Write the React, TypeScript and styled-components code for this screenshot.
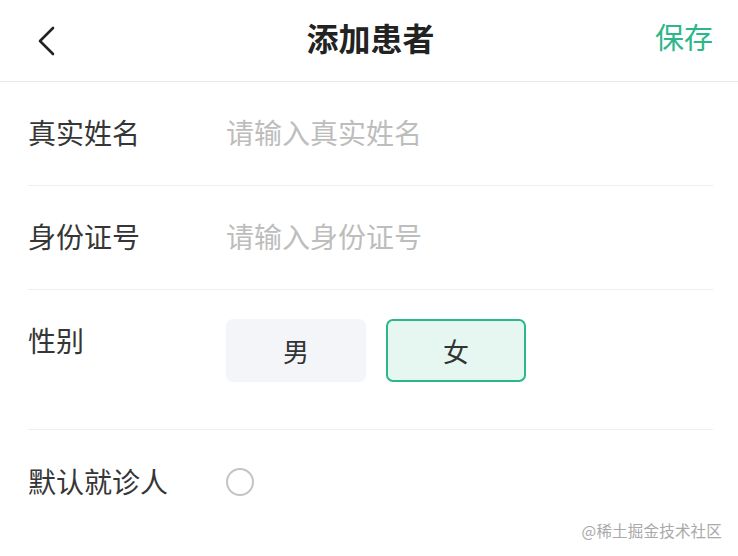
import React, { useState } from 'react';
import styled, { createGlobalStyle } from 'styled-components';

const GlobalStyle = createGlobalStyle`
  html, body {
    margin: 0;
    padding: 0;
    background: #fff;
  }
  body {
    font-family: "Noto Sans CJK SC", "Noto Sans", sans-serif;
    -webkit-font-smoothing: antialiased;
  }
  * {
    box-sizing: border-box;
  }
`;

const Page = styled.div`
  position: relative;
  width: 738px;
  height: 556px;
  overflow: hidden;
  background: #fff;
`;

const Header = styled.div`
  height: 82px;
  display: grid;
  grid-template-columns: 1fr auto 1fr;
  align-items: center;
  padding: 0 25px 0 28px;
  border-bottom: 1px solid #e8e8e8;
`;

const BackButton = styled.button`
  justify-self: start;
  background: none;
  border: none;
  padding: 0 0 0 8px;
  display: flex;
  align-items: center;
  cursor: pointer;
`;

const Title = styled.h1`
  margin: 0;
  font-size: 32px;
  font-weight: 700;
  color: #222;
  line-height: 1;
  padding-bottom: 8px;
`;

const SaveButton = styled.button`
  justify-self: end;
  background: none;
  border: none;
  padding: 0 0 8px;
  font-family: inherit;
  font-size: 29px;
  color: #2bb78a;
  line-height: 1;
  cursor: pointer;
`;

const Form = styled.div`
  padding: 0 25px 0 28px;
`;

const Row = styled.div<{ $top?: boolean; $last?: boolean }>`
  display: flex;
  align-items: ${p => (p.$top ? 'flex-start' : 'center')};
  padding: ${p => (p.$top ? '29px 0 47px' : '36px 0 39px')};
  border-bottom: ${p => (p.$last ? 'none' : '1px solid #eeeeee')};
`;

const Label = styled.div<{ $offset?: boolean }>`
  width: 198px;
  flex-shrink: 0;
  font-size: 28px;
  line-height: 28px;
  color: #363636;
  margin-top: ${p => (p.$offset ? '7px' : '0')};
`;

const Input = styled.input`
  flex: 1;
  border: none;
  outline: none;
  padding: 0;
  font-family: inherit;
  font-size: 28px;
  line-height: 28px;
  height: 28px;
  color: #333;
  background: transparent;
  &::placeholder {
    color: #bdbdbd;
  }
`;

const Options = styled.div`
  display: flex;
  gap: 20px;
`;

const Option = styled.button<{ $active: boolean }>`
  width: 140px;
  height: 63px;
  border-radius: 7px;
  border: 2px solid ${p => (p.$active ? '#2bb78a' : 'transparent')};
  background: ${p => (p.$active ? '#e6f7f1' : '#f4f5f9')};
  font-family: inherit;
  font-size: 26px;
  color: #333;
  cursor: pointer;
  display: flex;
  align-items: center;
  justify-content: center;
  padding-bottom: 2px;
`;

const Radio = styled.span<{ $checked: boolean }>`
  width: 28px;
  height: 28px;
  margin-top: 2px;
  border-radius: 50%;
  border: 2px solid ${p => (p.$checked ? '#2bb78a' : '#c4c4c4')};
  background: ${p => (p.$checked ? '#2bb78a' : '#fff')};
  cursor: pointer;
`;

const Watermark = styled.div`
  position: absolute;
  right: 16px;
  bottom: 15px;
  font-size: 15.5px;
  color: #a9a9a9;
  letter-spacing: 0.2px;
`;

export default function App() {
  const [gender, setGender] = useState<'male' | 'female'>('female');
  const [isDefault, setIsDefault] = useState(false);

  return (
    <Page>
      <GlobalStyle />
      <Header>
        <BackButton aria-label="返回">
          <svg width="20" height="30" viewBox="0 0 20 30">
            <path d="M17 2 L4 15 L17 28" fill="none" stroke="#222" strokeWidth="2.6" strokeLinecap="round" strokeLinejoin="round" />
          </svg>
        </BackButton>
        <Title>添加患者</Title>
        <SaveButton>保存</SaveButton>
      </Header>
      <Form>
        <Row>
          <Label>真实姓名</Label>
          <Input placeholder="请输入真实姓名" />
        </Row>
        <Row>
          <Label>身份证号</Label>
          <Input placeholder="请输入身份证号" />
        </Row>
        <Row $top>
          <Label $offset>性别</Label>
          <Options>
            <Option $active={gender === 'male'} onClick={() => setGender('male')}>男</Option>
            <Option $active={gender === 'female'} onClick={() => setGender('female')}>女</Option>
          </Options>
        </Row>
        <Row $last>
          <Label>默认就诊人</Label>
          <Radio $checked={isDefault} onClick={() => setIsDefault(v => !v)} />
        </Row>
      </Form>
      <Watermark>@稀土掘金技术社区</Watermark>
    </Page>
  );
}
